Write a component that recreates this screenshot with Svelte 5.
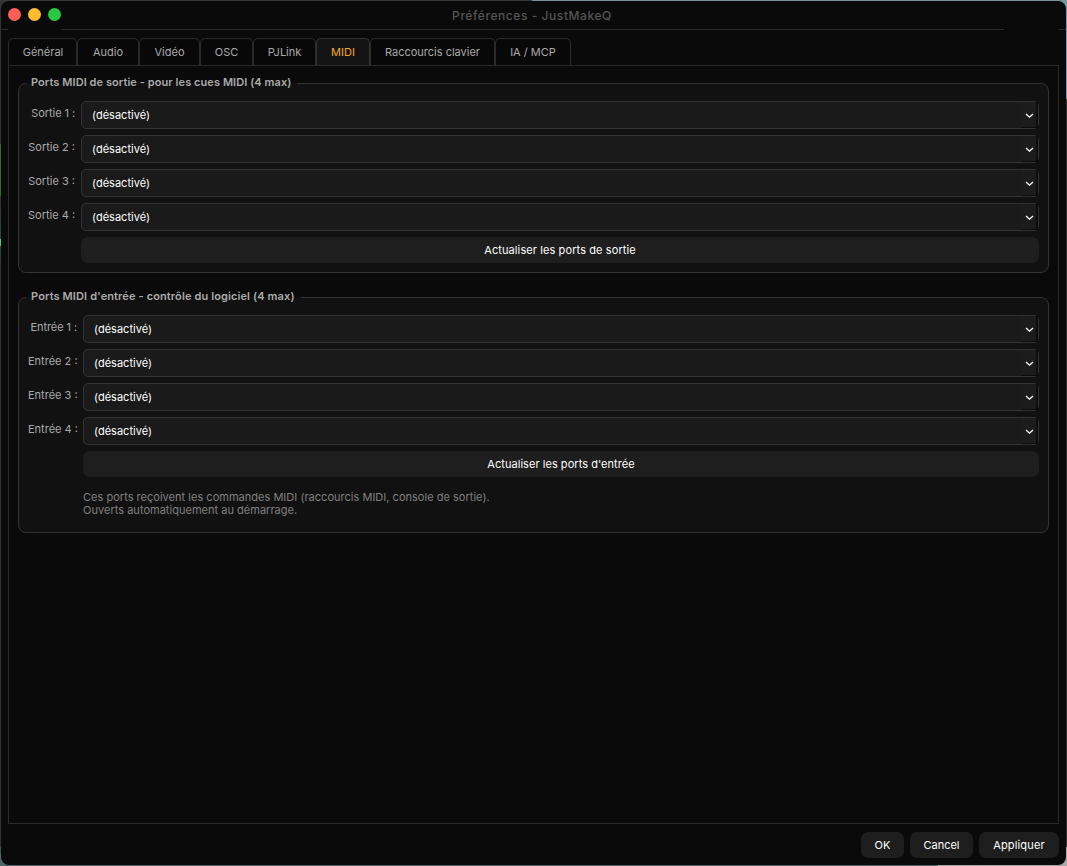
<script>
  const tabs = ['Général', 'Audio', 'Vidéo', 'OSC', 'PJLink', 'MIDI', 'Raccourcis clavier', 'IA / MCP'];
  let activeTab = $state('MIDI');

  const groups = [
    {
      id: 'out',
      title: 'Ports MIDI de sortie - pour les cues MIDI (4 max)',
      label: 'Sortie',
      action: 'Actualiser les ports de sortie',
      hint: [],
    },
    {
      id: 'in',
      title: "Ports MIDI d'entrée - contrôle du logiciel (4 max)",
      label: 'Entrée',
      action: "Actualiser les ports d'entrée",
      hint: ['Ces ports reçoivent les commandes MIDI (raccourcis MIDI, console de sortie).', 'Ouverts automatiquement au démarrage.'],
    },
  ];
</script>

<div class="desktop">
  <div class="window">
    <header class="titlebar">
      <div class="lights">
        <span class="light red"></span>
        <span class="light yellow"></span>
        <span class="light green"></span>
      </div>
      <h1>Préférences - JustMakeQ</h1>
      <div class="rule"><i class="stub"></i><i class="line"></i><i class="stub"></i></div>
    </header>

    <main>
      <div class="tabs" role="tablist">
        {#each tabs as tab, i}
          <button class="tab tab-{i}" class:active={activeTab === tab} role="tab" aria-selected={activeTab === tab} onclick={() => activeTab = tab}>{tab}</button>
        {/each}
      </div>

      <div class="pane">
        {#each groups as group}
          <fieldset class="group {group.id}">
            <legend>{group.title}</legend>
            {#each [1, 2, 3, 4] as n}
              <div class="row">
                <span class="label" class:first={n === 1}>{group.label} {n}&nbsp;:</span>
                <button class="combo" aria-haspopup="listbox">
                  <span class="value">(désactivé)</span>
                  <span class="drop">
                    <svg width="9" height="6" viewBox="0 0 9 6"><path d="M1 1 L4.5 4.2 L8 1" fill="none" stroke="#fff" stroke-width="1.3" /></svg>
                  </span>
                </button>
              </div>
            {/each}
            <button class="btn refresh">{group.action}</button>
            {#if group.hint.length}
              <p class="hint">{#each group.hint as line}<span>{line}</span>{/each}</p>
            {/if}
          </fieldset>
        {/each}
      </div>
    </main>

    <footer>
      <button class="btn ok">OK</button>
      <button class="btn cancel">Cancel</button>
      <button class="btn apply">Appliquer</button>
    </footer>
  </div>
</div>

<style>
  :global(body) { margin: 0; background: #2b2e2f; overflow: hidden; }
  * { box-sizing: border-box; }
  button { font: inherit; margin: 0; padding: 0; border: none; color: inherit; }

  .desktop {
    width: 1067px; height: 866px; padding: 1px;
    background:
      linear-gradient(90deg, #393b3b 532px, #789096 532px) 0 0 / 100% 1px no-repeat,
      linear-gradient(90deg, #4d6666 938px, #aaa 938px) 0 100% / 100% 12px no-repeat,
      linear-gradient(#7b99a6 99px, #303030 99px, #303030 847px, #aaa 847px) 100% 0 / 8px 100% no-repeat,
      linear-gradient(#333 144px, #336b34 144px, #336b34 196px, #333 196px, #2c4741 239px, #50c978 239px, #50c978 246px, #2c4741 246px, #333 268px, #333 847px, #3a5554 847px) 0 0 / 8px 100% no-repeat,
      #333;
    font-family: Inter, 'Liberation Sans', sans-serif; font-size: 11px; line-height: 14px; color: #aaa;
  }
  .window { display: flex; flex-direction: column; width: 1065px; height: 864px; background: #0a0a0a; border-radius: 8px; overflow: hidden; }

  .titlebar { display: grid; grid-template-columns: 1fr auto 1fr; grid-template-rows: 28px 1px; align-items: center; height: 29px; }
  .lights { display: flex; gap: 7px; padding-left: 7px; margin-top: -1px; }
  .light { width: 13px; height: 13px; border-radius: 50%; }
  .red { background: #ff5f57; }
  .yellow { background: #febc2e; }
  .green { background: #28c840; }
  h1 { margin: 1px 0 0 -3px; font-size: 12px; font-weight: 500; letter-spacing: 0.57px; color: #555; }
  .rule { grid-column: 1 / -1; display: grid; grid-template-columns: 7px 53px 943px 55px 7px; height: 1px; }
  .rule i { background: #2a2a2a; }
  .rule .line { grid-column: 3; }
  .rule .stub:last-child { grid-column: 5; }

  main { flex: 1; display: flex; flex-direction: column; padding: 8px 7px 0; }
  .tabs { display: flex; height: 27px; }
  .tab { height: 27px; background: #080808; border: 1px solid #2a2a2a; border-bottom: none; border-radius: 5px 5px 0 0; color: #aaa; }
  .tab.active { background: #141414; border-color: #333; color: #f5a623; }
  .tab-0 { width: 69px; padding-left: 1px; }
  .tab-1 { width: 62px; }
  .tab-2 { width: 61px; }
  .tab-3 { width: 53px; }
  .tab-4 { width: 63px; }
  .tab-5 { width: 54px; }
  .tab-6 { width: 125px; }
  .tab-7 { width: 76px; }

  .pane { flex: 1; border: 1px solid #2a2a2a; padding: 10px 9px; }
  .group { display: flex; flex-direction: column; position: relative; min-width: 0; margin: 7px 0 0; padding: 17px 9px 9px; border: 1px solid #333; border-radius: 8px; background: #111; }
  .group.out { height: 190px; }
  .group.in { height: 236px; margin-top: 24px; }
  /* the title sits over the frame line */
  legend { position: absolute; top: -10px; left: 7px; height: 16px; padding: 0 6px 0 5px; line-height: 16px; font-weight: 600; letter-spacing: 0.07px; white-space: nowrap; background: linear-gradient(#0a0a0a 9px, #111 9px); }
  .in legend { letter-spacing: 0.12px; }

  .row { display: flex; height: 28px; margin-bottom: 6px; }
  .label { flex: none; padding-top: 5px; text-align: right; white-space: nowrap; }
  .label.first { letter-spacing: -0.08px; }
  .out .label { width: 47px; }
  .in .label { width: 49px; }
  .combo { flex: 1; display: flex; justify-content: space-between; align-items: center; margin-left: 6px; padding-left: 10px; background: #1a1a1a; border: 1px solid #333; border-radius: 5px; color: #fff; text-align: left; }
  .value { letter-spacing: 0.02px; }
  .drop { display: flex; align-items: center; justify-content: center; width: 16px; height: 26px; padding-top: 2px; background: #1c1c1c; border-right: 2px solid #0c0c0c; border-bottom: 1px solid #0c0c0c; }
  .btn { height: 26px; border-radius: 7px; background: #1e1e1e; color: #fff; }
  .refresh { flex: none; }
  .out .refresh { margin-left: 53px; letter-spacing: 0.1px; }
  .in .refresh { margin-left: 55px; letter-spacing: 0.04px; }
  .hint { display: flex; flex-direction: column; margin: 14px 0 0 55px; line-height: 13px; letter-spacing: 0.02px; color: #808080; }

  footer { display: flex; justify-content: flex-end; gap: 6px; padding: 8px 7px 7px; }
  .ok { width: 43px; }
  .cancel { width: 63px; }
  .apply { width: 80px; letter-spacing: 0.15px; }
</style>
